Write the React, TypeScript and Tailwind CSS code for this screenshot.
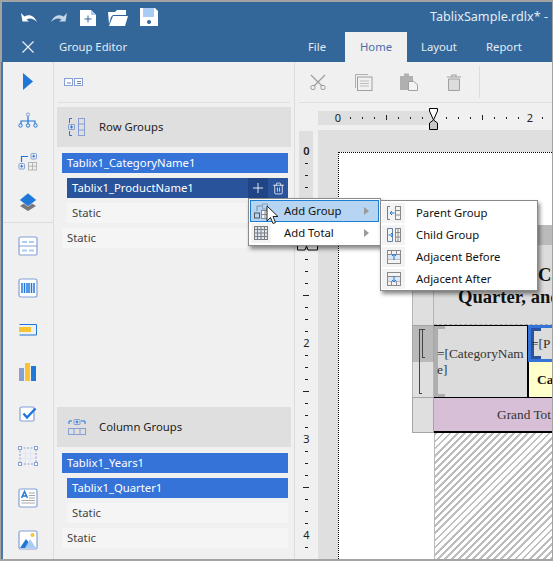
import { FC, ReactNode } from 'react';
import { Plus, Trash2 } from 'lucide-react';

const BLUE = '#1f77d8';
const SLATE = '#86a0d6';
const YELLOW = '#f8c433';

const Ic: FC<{ w?: number; h?: number; children: ReactNode }> = ({ w = 20, h = 20, children }) => (
	<svg width={w} height={h} viewBox={`0 0 ${w} ${h}`} fill="none" className="block shrink-0">
		{children}
	</svg>
);

const railTop: ReactNode[] = [
	<Ic key="play"><path d="M5 1 L15 9.5 L5 18 Z" fill={BLUE} /></Ic>,
	<Ic key="tree">
		<path d="M10 4 V11 M3 12 V9 H17 V12 M10 9 V12" stroke={BLUE} strokeWidth="1.2" />
		<circle cx="10" cy="2.5" r="1.6" stroke={SLATE} />
		<circle cx="2.5" cy="13.5" r="1.7" stroke={BLUE} />
		<circle cx="10" cy="13.5" r="1.7" stroke={BLUE} />
		<circle cx="17.5" cy="13.5" r="1.7" stroke={BLUE} />
	</Ic>,
	<Ic key="grid">
		<path d="M3.5 10 V4.5 H10" stroke={BLUE} strokeWidth="1.2" />
		<rect x="13" y="1.5" width="5.5" height="5.5" rx="1" stroke={SLATE} />
		<path d="M14.3 4.2 H17.2 M15.7 2.8 V5.6" stroke={BLUE} />
		<rect x="1" y="11.5" width="5.5" height="5.5" rx="1" stroke={SLATE} />
		<path d="M2.3 14.2 H5.2 M3.7 12.8 V15.6" stroke={BLUE} />
		<rect x="10.5" y="10.5" width="8" height="7.5" stroke="#b5b5b5" />
		<path d="M14.5 10.5 V18 M10.5 14.2 H18.5" stroke="#b5b5b5" />
	</Ic>,
	<Ic key="layers" h={20}>
		<path d="M10 9 L18 14 L10 19 L2 14 Z" fill="#777777" />
		<path d="M10 1 L18.5 8 L10 14.5 L1.5 8 Z" fill={BLUE} stroke="#ffffff" strokeWidth="0.5" />
	</Ic>,
];

const railBottom: ReactNode[] = [
	<Ic key="table">
		<rect x="1" y="1" width="18" height="18" rx="1.5" stroke={SLATE} strokeWidth="1.2" fill="#ffffff" />
		<path d="M1 10 H19" stroke={SLATE} />
		<path d="M4 6 H9 M11 6 H16 M4 14.5 H9 M11 14.5 H16" stroke="#a8ccf5" strokeWidth="2" />
	</Ic>,
	<Ic key="barcode">
		<rect x="1" y="1" width="18" height="18" rx="2" stroke={SLATE} strokeWidth="1.2" fill="#ffffff" />
		<path d="M4 5 V15 M6.5 5 V15 M9 5 V15 M11 5 V15 M13.5 5 V15 M16 5 V15" stroke={BLUE} strokeWidth="1.5" />
	</Ic>,
	<Ic key="bar">
		<path d="M1.5 4.5 H18.5 V15 H1.5" stroke={BLUE} strokeWidth="1" />
		<rect x="1" y="7" width="12" height="5" fill={YELLOW} />
	</Ic>,
	<Ic key="chart">
		<rect x="1" y="6" width="5" height="13" fill={SLATE} />
		<rect x="7" y="1" width="5" height="18" fill={YELLOW} />
		<rect x="13" y="4" width="5" height="15" fill={BLUE} />
	</Ic>,
	<Ic key="check">
		<rect x="2" y="3" width="14" height="14" rx="1.5" stroke={SLATE} strokeWidth="1.2" fill="#ffffff" />
		<path d="M5.5 9.5 L9 13.5 L17.5 4.5" stroke={BLUE} strokeWidth="2.4" />
	</Ic>,
	<Ic key="tablix">
		<rect x="2" y="2" width="16" height="16" stroke={SLATE} strokeDasharray="2 1.5" />
		<path d="M7.5 3 V17 M12.5 3 V17 M3 7.5 H17 M3 12.5 H17" stroke="#e0e6f3" />
		<rect x="0.5" y="0.5" width="3" height="3" fill="#fff" stroke={SLATE} />
		<rect x="16.5" y="0.5" width="3" height="3" fill="#fff" stroke={SLATE} />
		<rect x="0.5" y="16.5" width="3" height="3" fill="#fff" stroke={SLATE} />
		<rect x="16.5" y="16.5" width="3" height="3" fill="#fff" stroke={SLATE} />
	</Ic>,
	<Ic key="text">
		<rect x="1" y="1" width="18" height="18" rx="1.5" stroke={SLATE} strokeWidth="1.2" fill="#ffffff" />
		<path d="M3.5 10 L6.5 3.5 L9.5 10 M4.6 8 H8.4" stroke={BLUE} strokeWidth="1.4" />
		<path d="M11 5 H17 M11 7.5 H17 M11 10 H17 M3.5 12.5 H17 M3.5 15 H17" stroke="#a8a8a8" />
	</Ic>,
	<Ic key="image">
		<rect x="1" y="1" width="18" height="18" rx="1.5" stroke={SLATE} strokeWidth="1.2" fill="#ffffff" />
		<path d="M2 18 L8 9 L12 14 L10 18 Z" fill={BLUE} />
		<path d="M7 18 L12 9 L18 18 Z" fill="#a8ccf5" />
		<circle cx="14.5" cy="5" r="2" fill={YELLOW} />
	</Ic>,
];

const menuIcons: Record<string, ReactNode> = {
	addGroup: (
		<Ic w={18} h={16}>
			<path d="M3 8 V3 H8" stroke="#7a8a9e" />
			<rect x="0.5" y="10" width="5" height="5" stroke="#555" />
			<rect x="8.5" y="1" width="5" height="5" stroke="#8aa0c0" />
			<rect x="7.5" y="7.5" width="10" height="8" fill="#f4f7fb" stroke="#8a8a8a" />
			<path d="M11 7.5 V15.5 M14.5 7.5 V15.5 M7.5 11.5 H17.5" stroke="#8a8a8a" />
		</Ic>
	),
	addTotal: (
		<Ic w={14} h={14}>
			<rect x="0.5" y="0.5" width="13" height="13" fill="#dbe6f5" stroke="#7d7d7d" />
			<path d="M3.5 1 V13 M7 1 V13 M10.5 1 V13 M1 3.5 H13 M1 7 H13 M1 10.5 H13" stroke="#7d7d7d" />
		</Ic>
	),
	parent: (
		<Ic w={14} h={14}>
			<path d="M3 .5 H.5 V13.5 H3" stroke="#5f7ea8" />
			<rect x="8.5" y=".5" width="5" height="13" stroke="#8a8a8a" />
			<path d="M8.5 4.5 H13.5 M8.5 9 H13.5" stroke="#8a8a8a" />
			<path d="M7.5 7 H3 M5 5 L3 7 L5 9" stroke={BLUE} />
		</Ic>
	),
	child: (
		<Ic w={14} h={14}>
			<path d="M.5 .5 H5.5 V13.5 H.5 Z" stroke="#5f7ea8" />
			<rect x="8.5" y=".5" width="5" height="13" stroke="#8a8a8a" />
			<path d="M8.5 4.5 H13.5 M8.5 9 H13.5 M11 .5 V13.5" stroke="#8a8a8a" />
			<path d="M1.5 7 H6 M4 5 L6 7 L4 9" stroke={BLUE} />
		</Ic>
	),
	before: (
		<Ic w={14} h={14}>
			<rect x=".5" y=".5" width="13" height="13" stroke="#8a8a8a" />
			<path d="M.5 4.5 H13.5 M.5 9 H13.5 M4.5 .5 V4.5 M9.5 .5 V4.5" stroke="#8a8a8a" />
			<rect x="1" y="5" width="12" height="4" fill="#d9e7f7" />
			<path d="M7 10 V4 M5 6 L7 4 L9 6" stroke={BLUE} />
		</Ic>
	),
	after: (
		<Ic w={14} h={14}>
			<rect x=".5" y=".5" width="13" height="13" stroke="#8a8a8a" />
			<path d="M.5 4.5 H13.5 M.5 9 H13.5 M4.5 9 V13.5 M9.5 9 V13.5" stroke="#8a8a8a" />
			<rect x="1" y="5" width="12" height="4" fill="#d9e7f7" />
			<path d="M7 4 V10 M5 8 L7 10 L9 8" stroke={BLUE} />
		</Ic>
	),
};

const GroupHeader: FC<{ icon: ReactNode; label: string }> = ({ icon, label }) => (
	<div className="mx-[3px] flex h-10 items-center bg-[#dfdfdf] pl-[11px] text-[#222]">
		<span className="w-[31px]">{icon}</span>
		{label}
	</div>
);

const Item: FC<{ label: string; nested?: boolean; kind: 'blue' | 'dark' | 'plain' }> = ({ label, nested, kind }) => (
	<div
		className={`mt-[5px] flex h-5 items-center pl-[5px] ${nested ? 'ml-[13px]' : 'ml-2'} mr-[6px] ${
			kind === 'blue' ? 'bg-[#3573d9] text-white' : kind === 'dark' ? 'bg-[#29539b] text-white' : 'bg-[#f5f5f5] text-[#444]'
		}`}
	>
		<span className="flex-1">{label}</span>
		{kind === 'dark' && (
			<>
				<span className="flex h-5 w-5 items-center justify-center bg-[#1f4587]">
					<Plus size={16} strokeWidth={1.3} color="#fff" />
				</span>
				<span className="flex h-5 w-5 items-center justify-center">
					<Trash2 size={13} strokeWidth={1.4} color="#fff" />
				</span>
			</>
		)}
	</div>
);

const MenuRow: FC<{ icon: ReactNode; label: string; active?: boolean; arrow?: boolean; iconCol?: string; gap?: string }> = ({
	icon,
	label,
	active,
	arrow,
	iconCol = 'w-[23px]',
	gap = 'ml-[10px]',
}) => (
	<div className={`flex h-[22px] items-center ${active ? 'border border-[#1a7fd4] bg-[#b5d5f3]' : 'border border-transparent'}`}>
		<span className={`flex h-full shrink-0 items-center justify-center ${iconCol} ${active ? '' : 'bg-[#f3f3f3]'}`}>{icon}</span>
		<span className={`flex-1 text-[#111] ${gap}`}>{label}</span>
		{arrow && <span className="mr-[9px] h-0 w-0 border-y-[4px] border-l-[5px] border-y-transparent border-l-[#9a9a9a]" />}
	</div>
);

const hTicks = Array.from({ length: 18 }, (_, i) => i + 1);
const vTicks = Array.from({ length: 34 }, (_, i) => i + 1);

export default function App() {
	return (
		<div className="relative flex h-[561px] w-[553px] flex-col overflow-hidden border-y-2 border-r border-l border-[#a3a3a3] bg-[#f0f0f0] font-['Noto_Sans',sans-serif] text-[11.3px]">
			<header className="h-[60px] shrink-0 border-l border-[#a3a3a3] bg-[#336699] text-[#e3edf6]">
				<div className="flex h-[30px] items-center">
					<div className="ml-[19px] flex items-center">
						<span className="w-[30px]">
							<Ic w={16} h={10}>
								<path d="M0 1 L1.5 9.5 H8 L5.5 7.5 C9 5.5 12.5 6.5 16 10 C13.5 3.5 8 1.5 3.5 4.5 Z" fill="#ffffff" />
							</Ic>
						</span>
						<span className="w-[29px]">
							<Ic w={16} h={10}>
								<path d="M16 1 L14.5 9.5 H8 L10.5 7.5 C7 5.5 3.5 6.5 0 10 C2.5 3.5 8 1.5 12.5 4.5 Z" fill="#c7d6e6" />
							</Ic>
						</span>
						<span className="w-[28px]">
							<Ic w={16} h={17}>
								<path d="M0 1 H11 L16 6 V17 H0 Z" fill="#ffffff" />
								<path d="M11 1 L16 6 H11 Z" fill="#a8ccf5" />
								<path d="M4.5 10 H11.5 M8 6.5 V13.5" stroke="#336699" />
							</Ic>
						</span>
						<span className="w-[32px]">
							<Ic w={20} h={17}>
								<path d="M0 3 H7 L9 1 H18 V6 H5 L3 8 L1 15 Z" fill="#ffffff" />
								<path d="M5 7 H20 L17 17 H1 Z" fill="#ffffff" />
								<path d="M5 6.5 H19" stroke="#336699" />
							</Ic>
						</span>
						<span>
							<Ic w={18} h={18}>
								<path d="M0 0 H15 L18 3 V18 H0 Z" fill="#ffffff" />
								<rect x="3" y="0" width="11" height="9" fill="#a8ccf5" />
								<circle cx="9" cy="14" r="2" fill="#336699" />
							</Ic>
						</span>
					</div>
					<span className="ml-auto pr-1 text-[12.6px] whitespace-nowrap">TablixSample.rdlx* -</span>
				</div>
				<div className="flex h-[30px] items-center">
					<span className="ml-[20px] w-[37px]">
						<Ic w={12} h={12}>
							<path d="M.5 .5 L11.5 11.5 M11.5 .5 L.5 11.5" stroke="#e9f0f7" strokeWidth="1.2" />
						</Ic>
					</span>
					<span className="w-[249px]">Group Editor</span>
					<span className="w-[37px]">File</span>
					<span className="flex h-full w-[62px] items-center justify-center bg-[#f0f0f0] text-[#4a6da8]">Home</span>
					<span className="ml-[14px] w-[65px]">Layout</span>
					<span>Report</span>
				</div>
			</header>

			<div className="flex min-h-0 flex-1 border-l-2 border-[#4a77a8]">
				<nav className="w-[51px] shrink-0 border-r border-[#dcdcdc]">
					<div className="border-b border-[#dcdcdc]">
						{railTop.map((icon, i) => (
							<div key={i} className="flex h-10 items-center justify-center">
								{icon}
							</div>
						))}
					</div>
					<div className="pt-[2px]">
						{railBottom.map((icon, i) => (
							<div key={i} className="flex h-[42px] items-center justify-center">
								{icon}
							</div>
						))}
					</div>
				</nav>

				<aside className="w-[241px] shrink-0 border-r border-[#dcdcdc]">
					<div className="mx-1 flex h-[41px] items-center border-b border-[#dfdfdf] pl-[6px]">
						<Ic w={19} h={8}>
							<rect x=".5" y=".5" width="8" height="7" fill="#fff" stroke={SLATE} />
							<rect x="10.5" y=".5" width="8" height="7" fill="#fff" stroke={SLATE} />
							<path d="M3 5 H7 M13 3.5 H17 M13 5.5 H17" stroke="#6d7f9e" />
						</Ic>
					</div>
					<section className="h-[300px] pt-1">
						<GroupHeader
							label="Row Groups"
							icon={
								<Ic w={18} h={18}>
									<path d="M4 .5 H1.5 V5 M1.5 13 V17.5 H4" stroke={BLUE} />
									<rect x=".5" y="6.5" width="6" height="5" rx=".5" stroke={SLATE} />
									<path d="M2 9 H5 M3.5 7.5 V10.5" stroke={BLUE} />
									<rect x="10.5" y=".5" width="6" height="17" stroke={SLATE} />
									<path d="M10.5 6 H16.5 M10.5 12 H16.5" stroke={SLATE} />
								</Ic>
							}
						/>
						<div className="pt-px">
							<Item label="Tablix1_CategoryName1" kind="blue" />
							<Item label="Tablix1_ProductName1" kind="dark" nested />
							<Item label="Static" kind="plain" nested />
							<Item label="Static" kind="plain" />
						</div>
					</section>
					<section className="h-[150px] pt-1">
						<GroupHeader
							label="Column Groups"
							icon={
								<Ic w={18} h={16}>
									<path d="M1 5 V2 H4 M13 2 H17 V5" stroke={BLUE} />
									<rect x="6" y=".5" width="6" height="5" rx=".5" stroke={SLATE} />
									<path d="M7.5 3 H10.5 M9 1.5 V4.5" stroke={BLUE} />
									<rect x=".5" y="9.5" width="17" height="6" stroke={SLATE} />
									<path d="M6 9.5 V15.5 M12 9.5 V15.5" stroke={SLATE} />
								</Ic>
							}
						/>
						<div className="pt-px">
							<Item label="Tablix1_Years1" kind="blue" />
							<Item label="Tablix1_Quarter1" kind="blue" nested />
							<Item label="Static" kind="plain" nested />
							<Item label="Static" kind="plain" />
						</div>
					</section>
				</aside>

				<main className="flex min-w-0 flex-1 flex-col">
					<div className="ml-1 flex h-[41px] shrink-0 items-center border-b border-[#dfdfdf]">
						<span className="ml-[11px] w-[45px]">
							<Ic w={16} h={16}>
								<path d="M1 1 L12 12 M15 1 L4 12" stroke="#9c9c9c" strokeWidth="1.2" />
								<circle cx="3" cy="13.5" r="2.2" stroke="#9c9c9c" />
								<circle cx="13" cy="13.5" r="2.2" stroke="#9c9c9c" />
							</Ic>
						</span>
						<span className="w-[45px]">
							<Ic w={18} h={17}>
								<path d="M.5 14 V.5 H13" stroke="#b0b0b0" />
								<rect x="2.5" y="3" width="14.5" height="13.5" fill="#f0f0f0" stroke="#a0a0a0" />
								<path d="M5 7 H14 M5 9.5 H14 M5 12 H14" stroke="#bdbdbd" />
							</Ic>
						</span>
						<span className="w-[46px]">
							<Ic w={18} h={18}>
								<rect x="0" y="3" width="13" height="14" fill="#b0b0b0" />
								<rect x="4" y="0.5" width="5" height="4" fill="#b0b0b0" />
								<path d="M8.5 8.5 H14 L17.5 12 V17.5 H8.5 Z" fill="#f4f4f4" stroke="#a0a0a0" />
							</Ic>
						</span>
						<span className="w-[33px]">
							<Ic w={16} h={17}>
								<path d="M1 3 H15 M6 3 V1 H10 V3" stroke="#a0a0a0" strokeWidth="1.2" />
								<path d="M2.5 5 H13.5 V16.5 H2.5 Z" fill="#dcdcdc" stroke="#a0a0a0" />
							</Ic>
						</span>
						<span className="h-8 w-px bg-[#dcdcdc]" />
					</div>

					<svg width="257" height="27" className="block shrink-0" fontFamily="Noto Sans, sans-serif" fontSize="11">
						<rect x="23" y="8" width="114" height="14" fill="#dfdfdf" />
						<text x="43" y="19" textAnchor="middle" fill="#222">0</text>
						<text x="235" y="19" textAnchor="middle" fill="#222">2</text>
						{hTicks.map((i) => {
							const x = 43 + i * 12;
							if (i === 8 || i === 16) return null;
							const long = i % 4 === 0;
							return <rect key={i} x={x} y={long ? 12 : 14} width="1" height={long ? 5 : 2} fill="#222" />;
						})}
						<path d="M134.5 5.5 H142.5 V8 L138.5 17 L134.5 8 Z" fill="#fff" stroke="#000" strokeWidth="1" />
						<path d="M134.5 26.5 H142.5 V20 L138.5 17 L134.5 20 Z" fill="#c8c8c8" stroke="#000" strokeWidth="1" />
					</svg>

					<div className="flex min-h-0 flex-1">
						<svg width="23" height="429" className="block shrink-0" fontFamily="Noto Sans, sans-serif" fontSize="11">
							<rect x="4" y="1" width="14" height="119" fill="#dfdfdf" />
							<text x="11.5" y="25" textAnchor="middle" fontWeight="600" fill="#222">0</text>
							<text x="11.5" y="217" textAnchor="middle" fill="#222">2</text>
							<text x="11.5" y="313" textAnchor="middle" fill="#222">3</text>
							<text x="11.5" y="409" textAnchor="middle" fill="#222">4</text>
							{vTicks.map((i) => {
								if (i % 8 === 0) return null;
								const long = i % 4 === 0;
								return <rect key={i} x={long ? 8 : 10} y={21 + i * 12} width={long ? 6 : 3} height="1" fill="#222" />;
							})}
							<path d="M2.5 111.5 V120 H10 L11.5 116 L13 120 H22.5 V111.5" fill="#fff" stroke="#000" />
						</svg>

						<div className="flex min-w-0 flex-1 flex-col bg-[#dfdfdf] pt-[22px] pl-5">
							<div className="flex min-h-0 flex-1 flex-col border-t border-l border-dotted border-black bg-white pt-[72px] pl-[73px]">
								<div className="grid shrink-0 grid-cols-[22px_94px_1fr] grid-rows-[20px_80px_37px_35px_36px] font-['Liberation_Serif',serif] text-[13.33px] leading-4 text-[#333]">
									<div className="col-span-3 bg-[#bbbbbb]" />

									<div className="border-x border-[#b5b5b5] bg-[#dfdfdf]" />
									<div className="col-span-2 overflow-hidden border-b border-dashed border-[#aaa] bg-[#dcdcdc] pt-[19px] pl-6 text-[18.6px] leading-[22px] font-bold whitespace-nowrap text-[#111]">
										<div className="pl-[80px]">Ca</div>
										<div>Quarter, and</div>
									</div>

									<div className="relative border-x border-t border-[#a5a5a5] bg-[#b9b9b9]">
										<span className="absolute top-[3px] left-[6px] h-[65px] w-[3px] border-y border-l border-[#444]" />
										<span className="absolute top-[3px] left-[9px] h-[29px] w-[3px] border-y border-l border-[#444]" />
									</div>
									<div className="relative row-span-2 flex items-center border-t border-r border-black bg-[#dcdcdc] pl-[3px] break-all">
										<span className="absolute top-0 bottom-0 left-0 w-[4px] bg-[#aeaeae]" />
										<span className="absolute top-0 left-0 h-[3px] w-[11px] bg-[#aeaeae]" />
										<span className="absolute bottom-0 left-0 h-[3px] w-[11px] bg-[#aeaeae]" />
										<span className="relative">=[CategoryName]</span>
									</div>
									<div className="relative flex items-center overflow-hidden border-[3px] border-r-0 border-[#3573d9] bg-[#dcdcdc] whitespace-nowrap">
										<span className="absolute top-0 bottom-0 left-0 w-[3px] bg-[#29539b]" />
										<span className="absolute top-0 left-0 h-[3px] w-[10px] bg-[#29539b]" />
										<span className="absolute bottom-0 left-0 h-[3px] w-[10px] bg-[#29539b]" />
										<span className="relative">=[P</span>
									</div>

									<div className="border-x border-[#b5b5b5] bg-[#dfdfdf]" />
									<div className="flex items-center border-l border-black bg-[#ffffcc] pl-2 font-bold text-[#111]">Ca</div>

									<div className="border-x border-y border-[#a5a5a5] bg-[#dfdfdf]" />
									<div className="col-span-2 flex items-center overflow-hidden border-t border-b-2 border-t-black border-b-black bg-[#d8bfd8] pl-[63px] whitespace-nowrap">
										Grand Tot
									</div>
								</div>
								<div className="ml-[22px] min-h-0 flex-1 border-l border-[#bbb] bg-[repeating-linear-gradient(135deg,#bdbdbd_0px,#bdbdbd_2px,#ffffff_2px,#ffffff_5px)]" />
							</div>
						</div>
					</div>
				</main>
			</div>

			<div className="absolute top-[196px] left-[247px] w-[133px] border border-[#8a8a8a] bg-white p-px shadow-[2px_3px_4px_rgba(0,0,0,0.45)]">
				<MenuRow icon={menuIcons.addGroup} label="Add Group" active arrow />
				<MenuRow icon={menuIcons.addTotal} label="Add Total" arrow iconCol="w-[20px]" gap="ml-[13px]" />
			</div>
			<div className="absolute top-[198px] left-[379px] w-[158px] border border-[#8a8a8a] bg-white pt-px shadow-[2px_3px_4px_rgba(0,0,0,0.45)]">
				<MenuRow icon={menuIcons.parent} label="Parent Group" gap="ml-[11px]" />
				<MenuRow icon={menuIcons.child} label="Child Group" gap="ml-[11px]" />
				<MenuRow icon={menuIcons.before} label="Adjacent Before" gap="ml-[11px]" />
				<MenuRow icon={menuIcons.after} label="Adjacent After" gap="ml-[11px]" />
			</div>
			<svg width="14" height="21" className="absolute top-[203px] left-[265px]">
				<path d="M1 1 V16 L4.5 12.5 L7 18.5 L9.5 17.5 L7 11.5 L12 11.5 Z" fill="#fff" stroke="#222" strokeWidth="1" />
			</svg>
		</div>
	);
}
